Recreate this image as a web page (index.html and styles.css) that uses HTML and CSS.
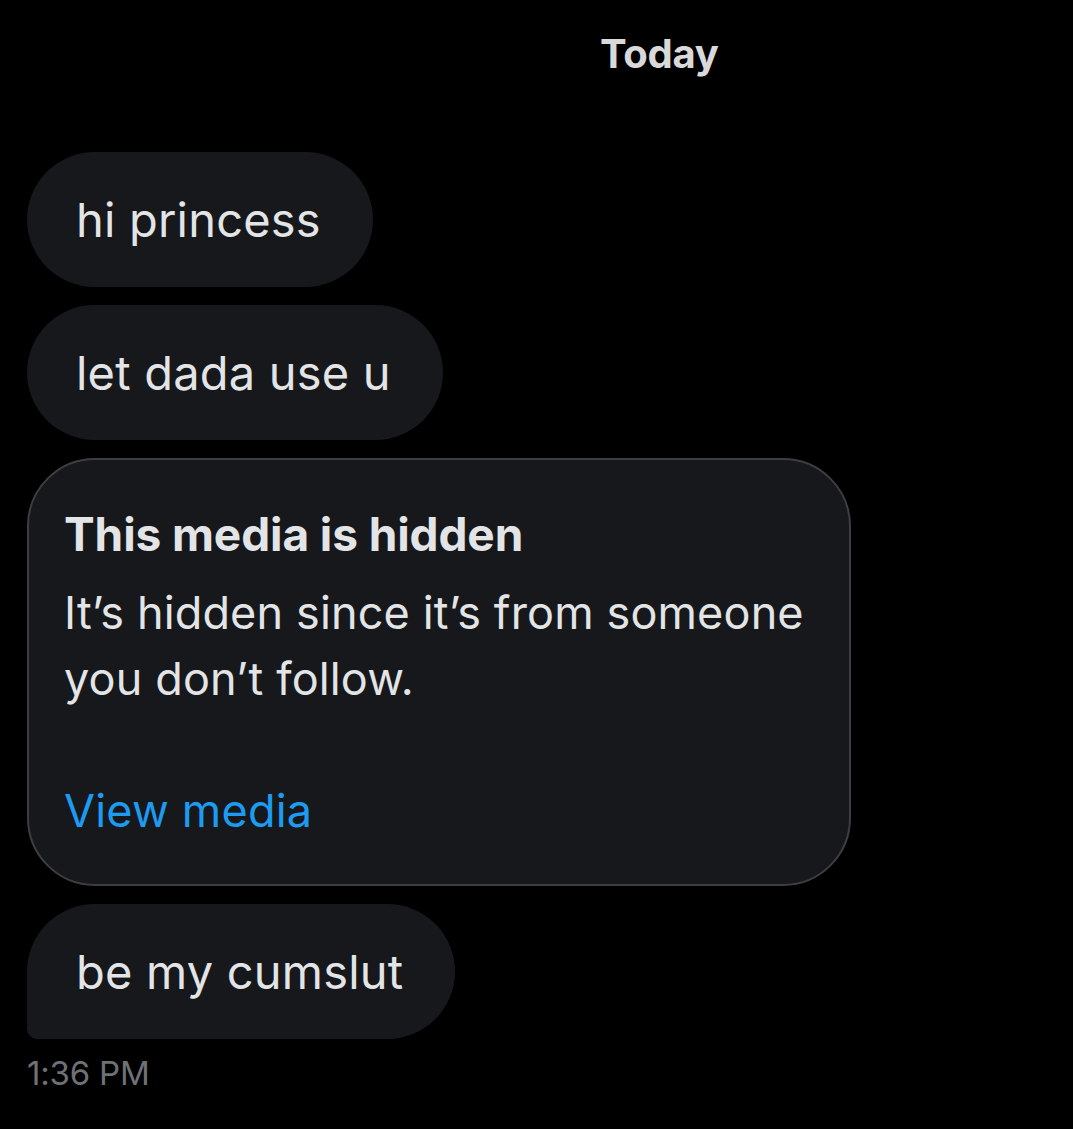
FILE: index.html
```html
<!DOCTYPE html>
<html>
<head>
<meta charset="utf-8">
<link rel="stylesheet" href="styles.css">
</head>
<body>
<div class="chat">
  <div class="day">Today</div>
  <div class="msgs">
    <div class="bubble">hi princess</div>
    <div class="bubble">let dada use u</div>
    <div class="card">
      <div class="card-title">This media is hidden</div>
      <div class="card-body">It’s hidden since it’s from someone you don’t follow.</div>
      <div class="card-link">View media</div>
    </div>
    <div class="bubble last">be my cumslut</div>
  </div>
  <div class="time">1:36 PM</div>
</div>
</body>
</html>
```
FILE: styles.css
```css
html, body {
  margin: 0;
  padding: 0;
  background: #000;
}
body {
  font-family: Inter, "Noto Sans", sans-serif;
  color: #e7e9ea;
  width: 1073px;
  height: 1129px;
  overflow: hidden;
}
.chat {
  display: flex;
  flex-direction: column;
  padding: 0 0 0 27px;
}
.day {
  padding: 29px 0 0 573px;
  font-size: 40px;
  font-weight: 700;
  line-height: 50px;
  color: #d9d9d9;
  letter-spacing: -0.3px;
}
.msgs {
  display: flex;
  flex-direction: column;
  align-items: flex-start;
  gap: 18px;
  margin-top: 73px;
}
.bubble {
  background: #16181c;
  height: 135px;
  border-radius: 68px;
  padding: 0 52px 0 49px;
  display: flex;
  align-items: center;
  font-size: 47px;
  letter-spacing: 0.2px;
  color: #e2e4e6;
}
.bubble.last {
  border-bottom-left-radius: 10px;
}
.card {
  box-sizing: border-box;
  width: 824px;
  height: 428px;
  background: #16181c;
  border: 2px solid #3d3e41;
  border-radius: 68px;
  padding: 44px 30px 0 35px;
}
.card-title {
  font-size: 46px;
  font-weight: 700;
  line-height: 60px;
  letter-spacing: -0.1px;
  color: #e2e4e6;
}
.card-body {
  font-size: 45px;
  line-height: 66px;
  letter-spacing: 0.15px;
  margin-top: 16px;
  color: #e2e4e6;
}
.card-link {
  font-size: 45px;
  line-height: 66px;
  letter-spacing: 0.2px;
  margin-top: 66px;
  color: #1d9bf0;
}
.time {
  margin-top: 14px;
  font-size: 33px;
  line-height: 40px;
  color: #6e7277;
  letter-spacing: -0.2px;
}
```
